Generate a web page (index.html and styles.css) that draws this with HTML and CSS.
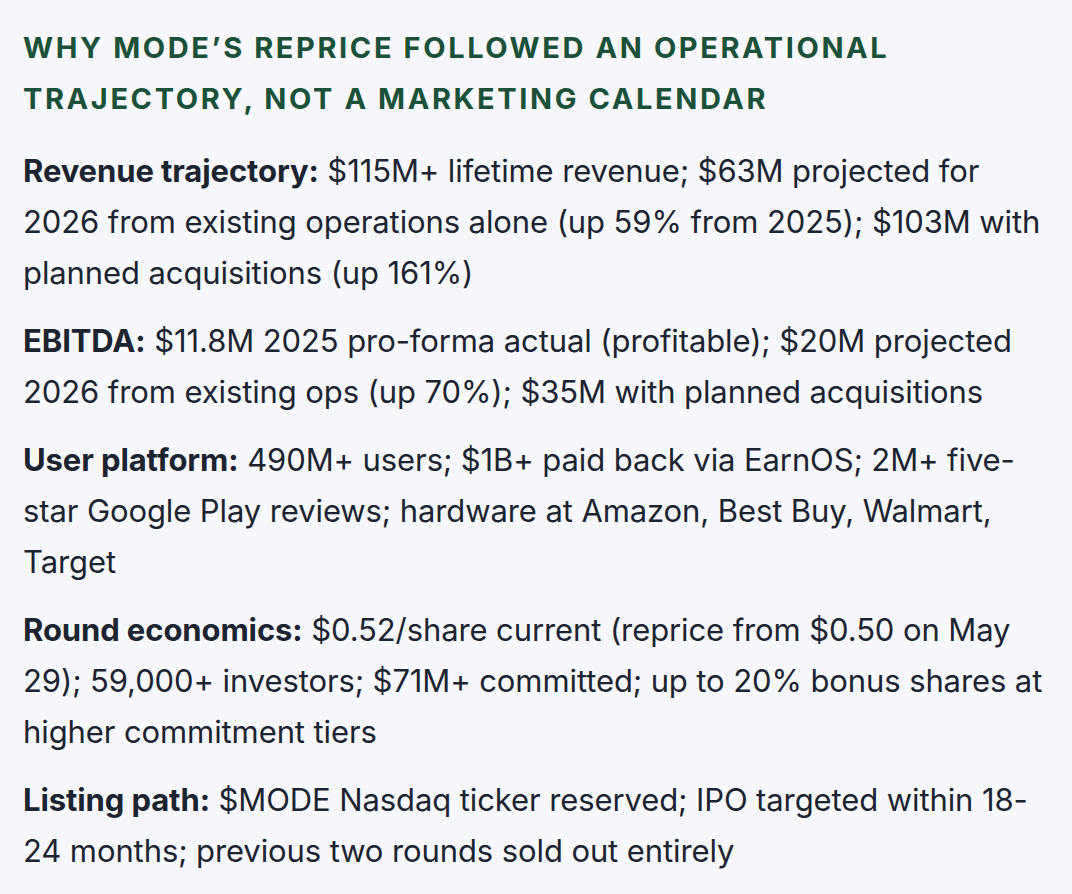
FILE: index.html
```html
<!DOCTYPE html>
<html lang="en">
<head>
<meta charset="utf-8">
<title>Why Mode's reprice</title>
<link rel="stylesheet" href="styles.css">
</head>
<body>
<section class="panel">
  <h2 class="panel-title">Why Mode’s reprice followed an operational trajectory, not a marketing calendar</h2>
  <p class="item"><strong>Revenue trajectory:</strong> $115M+ lifetime revenue; $63M projected for 2026 from existing operations alone (up 59% from 2025); $103M with planned acquisitions (up 161%)</p>
  <p class="item"><strong>EBITDA:</strong> $11.8M 2025 pro-forma actual (profitable); $20M projected 2026 from existing ops (up 70%); $35M with planned acquisitions</p>
  <p class="item"><strong>User platform:</strong> 490M+ users; $1B+ paid back via EarnOS; 2M+ five-star Google Play reviews; hardware at Amazon, Best Buy, Walmart, Target</p>
  <p class="item"><strong>Round economics:</strong> $0.52/share current (reprice from $0.50 on May 29); 59,000+ investors; $71M+ committed; up to 20% bonus shares at higher commitment tiers</p>
  <p class="item"><strong>Listing path:</strong> $MODE Nasdaq ticker reserved; IPO targeted within 18-<wbr>24 months; previous two rounds sold out entirely</p>
</section>
</body>
</html>
```
FILE: styles.css
```css
html, body {
  margin: 0;
  padding: 0;
  background: #f7f8fb;
}
body {
  font-family: Inter, "Noto Sans", "Liberation Sans", sans-serif;
  color: #1b2430;
}
.panel {
  padding: 22px 20px 20px 23px;
  width: 1072px;
  box-sizing: border-box;
}
.panel-title {
  margin: 0 0 21px;
  font-size: 29px;
  line-height: 51px;
  font-weight: 700;
  letter-spacing: 2.6px;
  text-transform: uppercase;
  color: #1b5039;
}
.item {
  margin: 0 0 17px;
  font-size: 31px;
  line-height: 51px;
  letter-spacing: -0.1px;
}
.item strong {
  font-weight: 700;
}
```
